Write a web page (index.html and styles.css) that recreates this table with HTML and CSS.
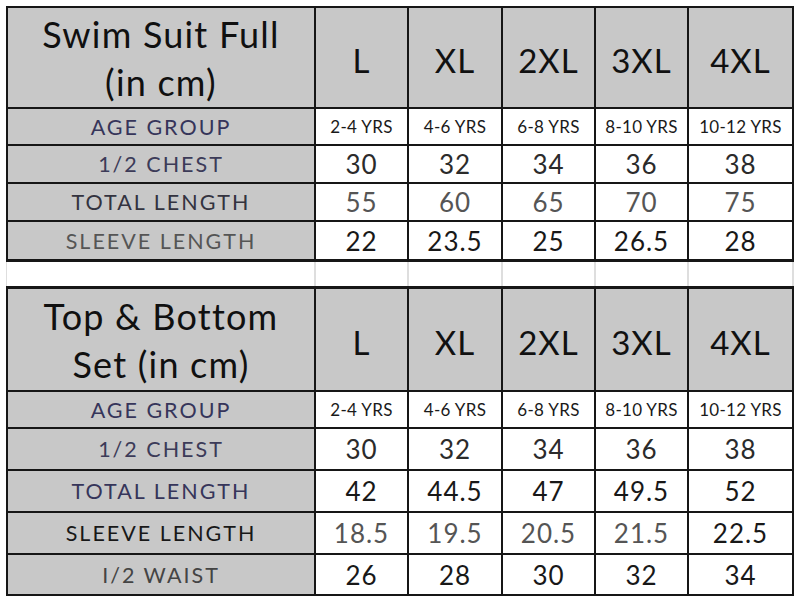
FILE: index.html
```html
<!DOCTYPE html>
<html>
<head>
<meta charset="utf-8">
<link rel="stylesheet" href="styles.css">
</head>
<body>
<div class="sheet">
  <div class="chart chart-a">
    <div class="cell hd title">Swim Suit Full<br>(in cm)</div>
    <div class="cell hd size">L</div>
    <div class="cell hd size">XL</div>
    <div class="cell hd size">2XL</div>
    <div class="cell hd size">3XL</div>
    <div class="cell hd size">4XL</div>

    <div class="cell lbl navy">AGE GROUP</div>
    <div class="cell v age">2-4 YRS</div>
    <div class="cell v age">4-6 YRS</div>
    <div class="cell v age">6-8 YRS</div>
    <div class="cell v age">8-10 YRS</div>
    <div class="cell v age">10-12 YRS</div>

    <div class="cell lbl navy2">1/2 CHEST</div>
    <div class="cell v num dark">30</div>
    <div class="cell v num dark">32</div>
    <div class="cell v num dark">34</div>
    <div class="cell v num dark">36</div>
    <div class="cell v num dark">38</div>

    <div class="cell lbl slate">TOTAL LENGTH</div>
    <div class="cell v num grey">55</div>
    <div class="cell v num grey">60</div>
    <div class="cell v num grey">65</div>
    <div class="cell v num grey">70</div>
    <div class="cell v num grey">75</div>

    <div class="cell lbl grey">SLEEVE LENGTH</div>
    <div class="cell v num black">22</div>
    <div class="cell v num black">23.5</div>
    <div class="cell v num black">25</div>
    <div class="cell v num black">26.5</div>
    <div class="cell v num black">28</div>
  </div>

  <div class="spacer">
    <div></div><div></div><div></div><div></div><div></div><div></div>
  </div>

  <div class="chart chart-b">
    <div class="cell hd title">Top &amp; Bottom<br>Set (in cm)</div>
    <div class="cell hd size">L</div>
    <div class="cell hd size">XL</div>
    <div class="cell hd size">2XL</div>
    <div class="cell hd size">3XL</div>
    <div class="cell hd size">4XL</div>

    <div class="cell lbl navy">AGE GROUP</div>
    <div class="cell v age">2-4 YRS</div>
    <div class="cell v age">4-6 YRS</div>
    <div class="cell v age">6-8 YRS</div>
    <div class="cell v age">8-10 YRS</div>
    <div class="cell v age">10-12 YRS</div>

    <div class="cell lbl navy2">1/2 CHEST</div>
    <div class="cell v num dark">30</div>
    <div class="cell v num dark">32</div>
    <div class="cell v num dark">34</div>
    <div class="cell v num dark">36</div>
    <div class="cell v num dark">38</div>

    <div class="cell lbl navy">TOTAL LENGTH</div>
    <div class="cell v num black">42</div>
    <div class="cell v num black">44.5</div>
    <div class="cell v num black">47</div>
    <div class="cell v num black">49.5</div>
    <div class="cell v num black">52</div>

    <div class="cell lbl black">SLEEVE LENGTH</div>
    <div class="cell v num grey">18.5</div>
    <div class="cell v num grey">19.5</div>
    <div class="cell v num grey">20.5</div>
    <div class="cell v num grey">21.5</div>
    <div class="cell v num black">22.5</div>

    <div class="cell lbl grey2">I/2 WAIST</div>
    <div class="cell v num black">26</div>
    <div class="cell v num black">28</div>
    <div class="cell v num black">30</div>
    <div class="cell v num black">32</div>
    <div class="cell v num black">34</div>
  </div>
</div>
</body>
</html>
```

FILE: styles.css
```css
html, body {
  margin: 0;
  padding: 0;
  background: #ffffff;
}

body {
  font-family: Lato, "Open Sans", sans-serif;
  color: #111;
}

.sheet {
  width: 788px;
  padding: 6px 0 0 6px;
}

.chart {
  display: grid;
  grid-template-columns: 306px 91px 92px 91px 91px 103px;
  gap: 2px;
  background: #161616;
  padding: 2px;
}

.chart-a {
  grid-template-rows: 99px 35px 36px 36px 37px;
  padding-bottom: 3px;
}

.chart-b {
  grid-template-rows: 101px 35px 40px 40px 40px 39px;
  padding-top: 3px;
}

.spacer {
  display: grid;
  grid-template-columns: 307px 91px 92px 91px 91px 103px;
  column-gap: 2px;
  height: 24px;
  background: #dedede;
  padding: 0 1px 0 1px;
}

.spacer div {
  background: #ffffff;
}

.cell {
  display: flex;
  align-items: center;
  justify-content: center;
  text-align: center;
  background: #ffffff;
}

.hd {
  background: #c8c8c8;
}

.title {
  font-size: 36px;
  line-height: 48px;
  letter-spacing: 1.2px;
  color: #101010;
}

.size {
  font-size: 33px;
  letter-spacing: 1px;
  color: #111;
  padding-top: 4px;
}

.lbl {
  background: #c8c8c8;
  font-size: 21.5px;
  letter-spacing: 2px;
}

.age {
  font-size: 17px;
  letter-spacing: 0.3px;
  color: #1a1a1a;
}

.num {
  font-size: 26px;
  letter-spacing: 1px;
}

.navy { color: #36355a; }
.navy2 { color: #3c3b58; }
.slate { color: #33333f; }
.grey { color: #555555; }
.grey2 { color: #444444; }
.dark { color: #2b2b2b; }
.black { color: #181818; }
```
